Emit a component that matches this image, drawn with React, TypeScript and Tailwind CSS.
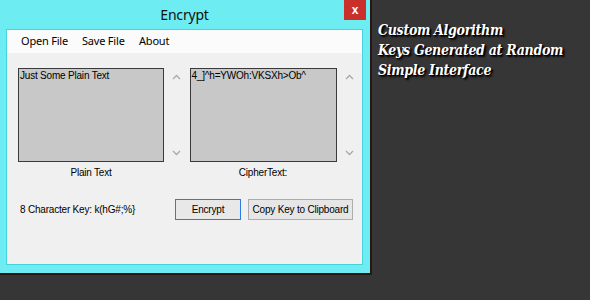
import React from "react";

const ms = { fontFamily: '"Liberation Sans", Arial, sans-serif', letterSpacing: "-0.2px" };
const seg = { fontFamily: '"Noto Sans", "Open Sans", sans-serif', letterSpacing: "-0.2px" };
const slab = { fontFamily: '"DejaVu Serif Condensed", "DejaVu Serif", serif', textShadow: "1px 1px 1px #000, 2px 2px 2px #000" };

function Arrows() {
  return (
    <div className="flex h-[94px] w-[27px] flex-col items-center justify-between py-[6px] text-[#a8a8a8]">
      <svg width="9" height="6" viewBox="0 0 9 6"><path d="M1 5 L4.5 1.5 L8 5" fill="none" stroke="#a8a8a8" strokeWidth="1.3" /></svg>
      <svg width="9" height="6" viewBox="0 0 9 6"><path d="M1 1 L4.5 4.5 L8 1" fill="none" stroke="#a8a8a8" strokeWidth="1.3" /></svg>
    </div>
  );
}

export default function App() {
  return (
    <div className="flex h-[300px] w-[590px] items-start bg-[#363636]">
      <div className="flex flex-col border-r-2 border-b-2 border-[#2a1414]">
        <div className="flex w-[370px] flex-col bg-[#6decf1] px-[6px] pb-[8px]" style={{ paddingRight: 7 }}>
          <div className="relative flex h-[29px] items-center justify-center">
            <span className="text-[14px] text-[#111]" style={seg}>Encrypt</span>
            <div className="absolute right-[-3px] top-0 flex h-[20px] w-[22px] items-center justify-center bg-[#c9302c]">
              <span className="text-[12px] font-bold leading-none text-white" style={ms}>x</span>
            </div>
          </div>
          <div className="flex h-[236px] flex-col border border-[#46d3da] bg-[#f0f0f0]">
            <div className="flex h-[23px] items-center bg-[#fbfbfb] pl-[14px] text-[11px] text-black" style={seg}>
              <span className="w-[61px]">Open File</span>
              <span className="w-[57px]">Save File</span>
              <span>About</span>
            </div>
            <div className="mt-[15px] flex pl-[11px]">
              <div className="flex flex-col items-center">
                <div className="h-[94px] w-[146px] border border-[#3a3a3a] bg-[#c8c8c8] px-[1px] text-[10px] leading-[14px] text-black" style={ms}>
                  Just Some Plain Text
                </div>
                <span className="mt-[3px] text-[10px] text-black" style={ms}>Plain Text</span>
              </div>
              <Arrows />
              <div className="flex flex-col items-center">
                <div className="h-[94px] w-[147px] border border-[#3a3a3a] bg-[#c8c8c8] px-[1px] text-[10px] leading-[14px] text-black" style={ms}>
                  {"4_]^h=YWOh:VKSXh>Ob^"}
                </div>
                <span className="mt-[3px] text-[10px] text-black" style={ms}>CipherText:</span>
              </div>
              <Arrows />
            </div>
            <div className="mt-[19px] flex items-center pl-[13px] text-[10px] text-black" style={ms}>
              <span className="w-[155px] whitespace-nowrap">{"8 Character Key: k(hG#;%}"}</span>
              <div className="flex h-[21px] w-[66px] items-center justify-center border border-[#2b7be0] bg-[#e8e8e8]">Encrypt</div>
              <div className="ml-[7px] flex h-[21px] w-[105px] items-center justify-center whitespace-nowrap border border-[#adadad] bg-[#e6e6e6]">Copy Key to Clipboard</div>
            </div>
          </div>
        </div>
      </div>
      <div className="ml-[6px] mt-[20px] flex flex-col text-[14px] font-bold italic leading-[20px] text-white" style={{ ...slab, letterSpacing: "-0.3px" }}>
        <span>Custom Algorithm</span>
        <span>Keys Generated at Random</span>
        <span>Simple Interface</span>
      </div>
    </div>
  );
}
